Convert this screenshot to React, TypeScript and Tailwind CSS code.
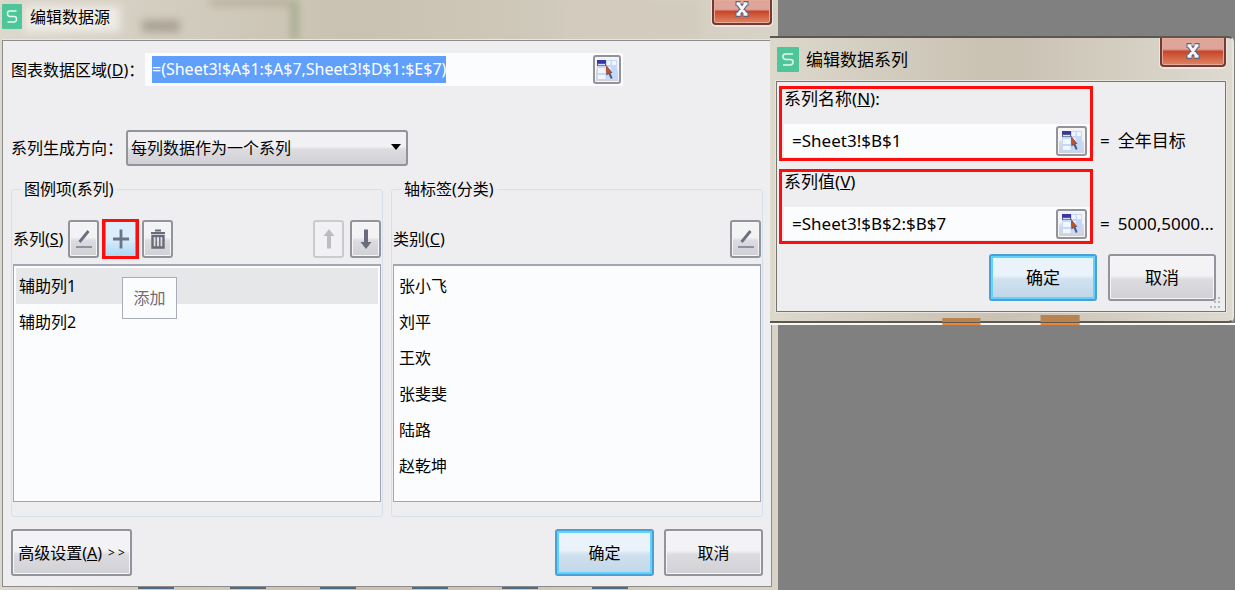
import { useEffect, useRef, type ReactNode } from 'react'
import clsx from 'clsx'

const series = ['辅助列1', '辅助列2']
const categories = ['张小飞', '刘平', '王欢', '张斐斐', '陆路', '赵乾坤']

function Logo({ className }: { className?: string }) {
  return (
    <svg viewBox="0 0 22 25" preserveAspectRatio="none" className={clsx('shrink-0', className)} aria-hidden="true">
      <rect width="22" height="25" rx="1" fill="#4fc69a" />
      <path d="M16 7H8.500Q6 7 6 9.500T8.500 12.500H13.500Q16 12.500 16 15T13.500 18H6" fill="none" stroke="#e4faf1" strokeWidth="1.600" />
    </svg>
  )
}

function CloseIcon() {
  return (
    <svg viewBox="0 0 16 16" className="h-4 w-4" fill="none" aria-hidden="true">
      <path d="M4.500 3L11.500 13M11.500 3L4.500 13M1.500 2.500H6.500M9.500 2.500H14.500M1.500 13.500H6.500M9.500 13.500H14.500" stroke="#5b6380" strokeWidth="5" />
      <path d="M4.500 3L11.500 13M11.500 3L4.500 13M2.500 2.700H6.500M9.500 2.700H13.500M2.500 13.300H6.500M9.500 13.300H13.500" stroke="#f6f6f8" strokeWidth="3" />
    </svg>
  )
}

function EditIcon() {
  return (
    <svg viewBox="0 0 18 20" className="h-5 w-[18px]" fill="none" stroke="#6b7080" aria-hidden="true">
      <path d="M4.500 13L13.500 2" strokeWidth="2.800" />
      <path d="M1 18H17" strokeWidth="1.800" stroke="#858a9a" />
    </svg>
  )
}

function PlusIcon() {
  return (
    <svg viewBox="0 0 18 20" className="h-5 w-[18px]" fill="none" stroke="#6b7486" strokeWidth="2.800" aria-hidden="true">
      <path d="M9 .5V19.500M1 10H17" />
    </svg>
  )
}

function TrashIcon() {
  return (
    <svg viewBox="0 0 18 20" className="h-5 w-[18px]" fill="none" stroke="#686c78" aria-hidden="true">
      <path d="M6 1.500H12M2 4H16" strokeWidth="2" />
      <path d="M3.500 7V18.500H14.500V7Z" strokeWidth="2.400" />
      <path d="M7.200 8V18M10.800 8V18" strokeWidth="1.400" />
    </svg>
  )
}

function ArrowIcon({ down, faded }: { down?: boolean; faded?: boolean }) {
  return (
    <svg viewBox="0 0 12 20" className={clsx('h-5 w-3', down && 'rotate-180')} aria-hidden="true">
      <path d="M6 0L11.500 7H8V19.500H4V7H.5Z" fill={faded ? '#bbbdc5' : '#686c7c'} />
    </svg>
  )
}

function RangeIcon() {
  return (
    <svg viewBox="0 0 20 20" className="h-5 w-5" aria-hidden="true">
      <rect width="20" height="20" fill="#c3d8fb" />
      <path d="M10 1H13.500V5H10ZM15 1H19V5H15ZM1 8H8.500V13H1ZM1 15H8.500V19H1ZM10 7H13.500V12H10Z" fill="#f1f6ff" />
      <rect width="9" height="6" fill="#565c86" />
      <rect width="9" height="3" fill="#3a35a8" />
      <rect x="1" y="4" width="7" height="1.300" fill="#dcdff0" />
      <path d="M9 5L15.500 13L13.500 13L15.500 18L14 19L11.500 14L9.500 15.500Z" fill="#5c5468" />
      <path d="M9 5L14.500 12L9.500 14Z" fill="#b9532c" />
    </svg>
  )
}

type ButtonProps = {
  label?: string
  className?: string
  primary?: boolean
  disabled?: boolean
  children: ReactNode
}

function Button({ label, className, primary, disabled, children }: ButtonProps) {
  return (
    <button
      type="button"
      aria-label={label}
      disabled={disabled}
      className={clsx(
        'flex shrink-0 items-center justify-center rounded-[3px] border-2',
        primary && 'border-[#4a9fd4] bg-linear-to-b from-[#eaf2fa] from-45% via-[#cfe1ef] via-55% to-[#c0d6e8] shadow-[inset_0_0_0_2px_#5fd3fb]',
        disabled && 'border-[#c9cbd1] bg-[#f1f1f3]',
        !primary && !disabled && 'border-[#92949b] bg-linear-to-b from-[#f3f3f5] from-45% via-[#dcdce0] via-55% to-[#d0d0d5] shadow-[inset_0_0_0_1px_#f6f6f8]',
        className,
      )}
    >
      {children}
    </button>
  )
}

function CloseButton({ className }: { className?: string }) {
  return (
    <button
      type="button"
      aria-label="关闭"
      className={clsx(
        'flex shrink-0 justify-center rounded-b-[4px] border-2 border-t-0 border-[#713c36] bg-linear-to-b from-[#e0a59a] from-40% via-[#c9452a] via-50% to-[#dd8462] shadow-[0_1px_0_1px_#ece7de,inset_0_0_0_1px_#e7aa98]',
        className,
      )}
    >
      <CloseIcon />
    </button>
  )
}

function ListBox({ label, items, selected }: { label: string; items: string[]; selected?: number }) {
  return (
    <ul role="listbox" aria-label={label} className="h-[238px] border border-t-2 border-[#a3a6b2] bg-[#fbfcfe] p-[2px]">
      {items.map((item, i) => (
        <li
          key={item}
          role="option"
          aria-selected={i === selected}
          className={clsx('flex h-9 items-center px-[3px]', i === selected && 'bg-[#e6e7e9]')}
        >
          {item}
        </li>
      ))}
    </ul>
  )
}

function SourceDialog() {
  const rangeRef = useRef<HTMLInputElement>(null)

  // the range is highlighted when the dialog opens
  useEffect(() => {
    rangeRef.current?.focus()
    rangeRef.current?.select()
  }, [])

  return (
    <section className="relative w-[63%] shrink-0 bg-linear-to-r from-[#dcd8cd] via-[#c9c1b1] via-45% to-[#d8d3c7] pr-[6px] pl-[2px] text-base">
      {/* the sheet behind shows through the glass title bar */}
      <svg viewBox="0 0 778 40" preserveAspectRatio="none" className="absolute inset-x-0 top-0 h-10 w-full" aria-hidden="true">
        <defs>
          <filter id="glass" x="-20%" y="-100%" width="140%" height="300%">
            <feGaussianBlur stdDeviation="4" />
          </filter>
        </defs>
        <g filter="url(#glass)">
          <rect x="24" y="6" width="96" height="26" fill="#efece6" />
          <rect x="142" y="20" width="38" height="12" fill="#a9a193" />
          <rect x="210" y="0" width="80" height="5" fill="#ada392" />
          <rect x="292" y="0" width="5" height="40" fill="#93a079" />
          <rect x="560" y="0" width="140" height="40" fill="#d3ccbe" />
        </g>
      </svg>

      <header className="relative flex h-10 items-start justify-between">
        <div className="flex items-center gap-2 pt-1">
          <Logo className="h-[25px] w-5" />
          <h1>编辑数据源</h1>
        </div>
        <CloseButton className="h-[25px] w-15 pt-[1px]" />
      </header>

      <div className="relative border border-[#8c8c8c] bg-[#eeeef0] px-2 pt-3 pb-[10px] shadow-[0_-1px_0_#e9e6de]">
        <div className="flex items-center">
          <label htmlFor="range" className="w-[134px] shrink-0">
            图表数据区域(<u>D</u>)：
          </label>
          <div className="flex h-[33px] max-w-[478px] flex-1 items-center bg-[#fbfcfe] pr-[2px] pl-[7px]">
            <input
              id="range"
              ref={rangeRef}
              defaultValue="=(Sheet3!$A$1:$A$7,Sheet3!$D$1:$E$7)"
              className="h-[27px] min-w-0 flex-1 leading-[27px] outline-none selection:bg-[#60a0fc] selection:text-white"
            />
            <Button label="选择区域" className="h-[29px] w-7">
              <RangeIcon />
            </Button>
          </div>
        </div>

        <div className="mt-11 flex items-center">
          <label htmlFor="direction" className="w-[115px] shrink-0">
            系列生成方向：
          </label>
          <div className="relative max-w-[282px] flex-1">
            <select
              id="direction"
              className="block h-9 w-full appearance-none rounded-[3px] border-2 border-[#92949b] bg-linear-to-b from-[#f1f1f3] from-45% via-[#dcdce0] via-55% to-[#d0d0d5] px-[3px]"
            >
              <option>每列数据作为一个系列</option>
              <option>每行数据作为一个系列</option>
            </select>
            <svg viewBox="0 0 10 6" className="pointer-events-none absolute top-[14px] right-[7px] h-[6px] w-[10px]" aria-hidden="true">
              <path d="M0 0H10L5 6Z" />
            </svg>
          </div>
        </div>

        <div className="mt-[11px] grid grid-cols-2 gap-2">
          <fieldset className="min-w-0 rounded-[3px] border border-[#d5e1ea] px-px pb-[14px]">
            <legend className="ml-2 px-[3px] leading-6">图例项(系列)</legend>
            <div className="mt-[19px] mb-[6px] flex h-[38px] items-center gap-[6px]">
              <span className="w-[49px] whitespace-nowrap">
                系列(<u>S</u>)
              </span>
              <Button label="编辑" className="h-[38px] w-[31px]">
                <EditIcon />
              </Button>
              <div className="relative">
                <button
                  type="button"
                  aria-describedby="add-tip"
                  aria-label="添加"
                  className="flex h-[38px] w-[31px] items-center justify-center border border-[#5fa7d8] bg-linear-to-b from-[#dceefa] from-45% to-[#a9d8f5]"
                >
                  <PlusIcon />
                </button>
                <span className="pointer-events-none absolute -inset-x-[3px] -inset-y-px border-3 border-[#fd0d0b]" />
                <span
                  id="add-tip"
                  role="tooltip"
                  className="absolute top-[57px] left-[17px] flex h-[42px] w-[55px] items-center justify-center border border-[#a9abb5] bg-[#fbfcfe] text-[#6d6e74]"
                >
                  添加
                </span>
              </div>
              <Button label="删除" className="h-[38px] w-[31px]">
                <TrashIcon />
              </Button>
              <div className="ml-auto flex gap-[6px]">
                <Button label="上移" disabled className="h-[38px] w-[31px]">
                  <ArrowIcon faded />
                </Button>
                <Button label="下移" className="h-[38px] w-[31px]">
                  <ArrowIcon down />
                </Button>
              </div>
            </div>
            <ListBox label="系列" items={series} selected={0} />
          </fieldset>

          <fieldset className="min-w-0 rounded-[3px] border border-[#d5e1ea] px-px pb-[14px]">
            <legend className="ml-2 px-[3px] leading-6">轴标签(分类)</legend>
            <div className="mt-[19px] mb-[6px] flex h-[38px] items-center justify-between">
              <span>
                类别(<u>C</u>)
              </span>
              <Button label="编辑" className="h-[38px] w-[31px]">
                <EditIcon />
              </Button>
            </div>
            <ListBox label="类别" items={categories} />
          </fieldset>
        </div>

        <footer className="mt-3 flex gap-[10px]">
          <Button className="mr-auto h-[47px] w-[121px]">
            <span className="flex items-center gap-[6px]">
              <span>
                高级设置(<u>A</u>)
              </span>
              <span className="text-xs">&gt; &gt;</span>
            </span>
          </Button>
          <Button primary className="h-[47px] w-[99px]">确定</Button>
          <Button className="h-[47px] w-[99px]">取消</Button>
        </footer>
      </div>

      <svg viewBox="0 0 770 2" preserveAspectRatio="none" className="h-[2px] w-full" fill="#4d6a86" aria-hidden="true">
        <path d="M136 0h36v2h-36zM228 0h36v2h-36zM318 0h36v2h-36zM410 0h36v2h-36zM500 0h36v2h-36zM590 0h36v2h-36z" />
      </svg>
    </section>
  )
}

type FieldProps = {
  id: string
  label: ReactNode
  value: string
  result: string
}

function SeriesField({ id, label, value, result }: FieldProps) {
  return (
    <div className="flex items-end">
      <div className="min-w-0 flex-1 border-3 border-[#fd0d0b] pb-px pl-[2px]">
        <label htmlFor={id} className="block leading-5">
          {label}
        </label>
        <div className="mt-[15px] flex h-[33px] items-center bg-[#fbfcfe] pr-[3px] pl-2">
          <input id={id} defaultValue={value} className="min-w-0 flex-1 outline-none" />
          <Button label="选择区域" className="h-[30px] w-[31px]">
            <RangeIcon />
          </Button>
        </div>
      </div>
      <output htmlFor={id} className="mb-1 flex h-[33px] w-[132px] items-center gap-2 pl-[7px]">
        <span>=</span>
        <span>{result}</span>
      </output>
    </div>
  )
}

function SeriesDialog() {
  return (
    <section className="relative z-10 mt-9 -ml-2 min-w-0 flex-1 self-start text-[17px]">
      <div className="mr-px rounded-tr-[6px] rounded-br-[6px] border-2 border-l-0 border-[#5c5750] border-r-[#e8e4da] bg-linear-to-r from-[#dcd8cc] via-[#c9c1b2] via-50% to-[#dedad0] pr-[6px] pb-[9px] pl-[6px]">
        <header className="flex h-[43px] items-start justify-between">
          <div className="flex items-center gap-[7px] pt-[9px] pl-px">
            <Logo className="h-[25px] w-[22px]" />
            <h2>编辑数据系列</h2>
          </div>
          <CloseButton className="h-[29px] w-[66px] pt-[5px]" />
        </header>

        <div className="border border-[#77756f] bg-[#eeeef0] pt-1 pb-[10px] pl-[2px] shadow-[0_0_0_1px_#eae6dd]">
          <div className="flex flex-col gap-2">
            <SeriesField
              id="series-name"
              label={<>系列名称(<u>N</u>):</>}
              value="=Sheet3!$B$1"
              result="全年目标"
            />
            <SeriesField
              id="series-values"
              label={<>系列值(<u>V</u>)</>}
              value="=Sheet3!$B$2:$B$7"
              result="5000,5000..."
            />
          </div>
          <footer className="relative mt-[10px] flex justify-end gap-[11px] pr-[9px]">
            <Button primary className="h-[47px] w-[108px]">确定</Button>
            <Button className="h-[47px] w-[108px]">取消</Button>
            <svg viewBox="0 0 12 12" className="absolute right-1 -bottom-2 h-3 w-3" fill="#b9b9bd" aria-hidden="true">
              <path d="M9 0h2v2H9zM5 4h2v2H5zM9 4h2v2H9zM1 9h2v2H1zM5 9h2v2H5zM9 9h2v2H9z" />
            </svg>
          </footer>
        </div>
      </div>
      <div className="h-[2px] bg-[#f7f7f5]" />
      <svg viewBox="0 0 464 10" preserveAspectRatio="none" className="absolute bottom-0 left-0 h-[10px] w-full" aria-hidden="true">
        <path d="M172 3H210V7H172ZM270 0H309V7H270Z" fill="#b98350" />
        <path d="M172 8H210V10H172ZM270 8H309V10H270Z" fill="#ee8434" />
      </svg>
    </section>
  )
}

export default function App() {
  return (
    <main className="flex min-h-screen bg-[#808080] font-['Noto_Sans','Noto_Sans_CJK_SC',sans-serif] text-black">
      <SourceDialog />
      <SeriesDialog />
    </main>
  )
}
